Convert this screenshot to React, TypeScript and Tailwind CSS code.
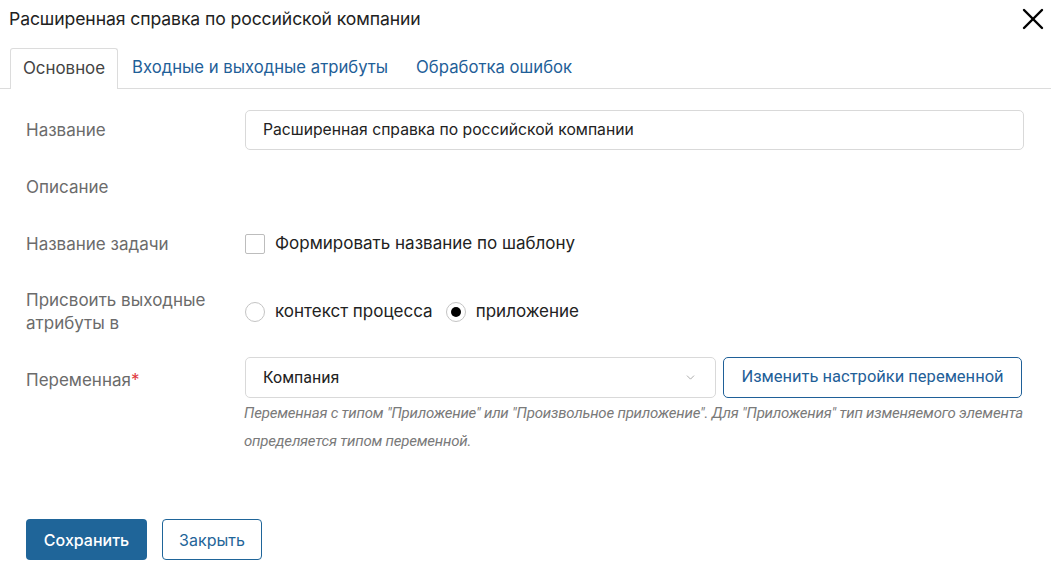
import { X, ChevronDown } from "lucide-react";

const Row = ({ label, children, className = "" }: { label: React.ReactNode; children?: React.ReactNode; className?: string }) => (
  <div className={`flex items-center ${className}`}>
    <div className="w-[219px] shrink-0 text-[17px] leading-[23px] text-[#6b6b6b]">{label}</div>
    <div className="flex-1 min-w-0">{children}</div>
  </div>
);

const App = () => {
  return (
    <div className="w-[1051px] h-[565px] bg-white overflow-hidden font-['Inter','Noto_Sans',sans-serif] text-[#222]">
      {/* Header */}
      <div className="flex items-center justify-between pl-[9px] pr-0 h-[38px]">
        <h1 className="text-[17.6px] font-normal tracking-[-0.1px] text-[#222]">
          Расширенная справка по российской компании
        </h1>
        <X className="w-[36px] h-[36px] text-black" strokeWidth={1.6} />
      </div>

      {/* Tabs */}
      <div className="flex items-end h-[51px] pl-[10px] border-b border-[#dcdcdc]">
        <div className="w-[108px] h-[41px] flex items-center justify-center border border-b-0 border-[#dcdcdc] rounded-t-[3px] bg-white -mb-px text-[16.9px] text-[#444]">
          Основное
        </div>
        <div className="h-[41px] pl-[14px] pr-[15px] flex items-center text-[16.7px] text-[#1f6098]">
          Входные и выходные атрибуты
        </div>
        <div className="h-[41px] px-[13px] flex items-center text-[16.7px] text-[#1f6098]">
          Обработка ошибок
        </div>
      </div>

      {/* Form */}
      <div className="pl-[26px] pr-[27px] pt-[21px] flex flex-col">
        <Row label="Название">
          <div className="h-[40px] border border-[#d9d9d9] rounded-[5px] flex items-center px-[17px] text-[15.7px] text-[#222]">
            Расширенная справка по российской компании
          </div>
        </Row>

        <Row label="Описание" className="mt-[22px] h-[30px]" />

        <Row label="Название задачи" className="mt-[27px] h-[30px]">
          <div className="flex items-center gap-[10px]">
            <div className="w-[20px] h-[20px] border border-[#bdbdbd] rounded-[2px] bg-white" />
            <span className="text-[17px] text-[#222]">Формировать название по шаблону</span>
          </div>
        </Row>

        <Row
          label={
            <>
              Присвоить выходные
              <br />
              атрибуты в
            </>
          }
          className="mt-[30px]"
        >
          <div className="flex items-center">
            <div className="w-[20px] h-[20px] rounded-full border border-[#c4c4c4] bg-white" />
            <span className="ml-[10px] text-[17px] text-[#222]">контекст процесса</span>
            <div className="ml-[13px] w-[20px] h-[20px] rounded-full border border-[#c4c4c4] bg-white flex items-center justify-center">
              <div className="w-[10px] h-[10px] rounded-full bg-black" />
            </div>
            <span className="ml-[10px] text-[17px] text-[#222]">приложение</span>
          </div>
        </Row>

        <div className="flex mt-[22px]">
          <div className="w-[219px] shrink-0 text-[17px] leading-[23px] text-[#6b6b6b] pt-[12px]">
            Переменная<span className="text-[#e0383e]">*</span>
          </div>
          <div className="flex-1 min-w-0">
            <div className="flex gap-[7px]">
              <div className="w-[471px] h-[41px] border border-[#d9d9d9] rounded-[5px] flex items-center justify-between pl-[17px] pr-[18px] font-['Roboto',sans-serif] text-[16px] text-[#222]">
                Компания
                <ChevronDown className="w-[13px] h-[13px] text-[#999]" strokeWidth={1.5} />
              </div>
              <div className="w-[299px] h-[41px] border border-[#1f6098] rounded-[5px] flex items-center justify-center font-['Roboto',sans-serif] text-[16.5px] text-[#1f6098]">
                Изменить настройки переменной
              </div>
            </div>
            <p className="mt-[1px] -ml-[1px] font-['Roboto',sans-serif] italic text-[15px] leading-[28px] text-[#7a7a7a] tracking-[-0.2px]">
              Переменная с типом "Приложение" или "Произвольное приложение". Для "Приложения" тип изменяемого элемента
              <br />
              определяется типом переменной.
            </p>
          </div>
        </div>

        <div className="flex gap-[15px] mt-[64px]">
          <button className="w-[121px] h-[41px] rounded-[4px] bg-[#1f6599] text-white text-[16px] font-medium">
            Сохранить
          </button>
          <button className="w-[100px] h-[41px] rounded-[4px] border border-[#1f6599] bg-white text-[#1f6599] text-[16px]">
            Закрыть
          </button>
        </div>
      </div>
    </div>
  );
};

export default App;
